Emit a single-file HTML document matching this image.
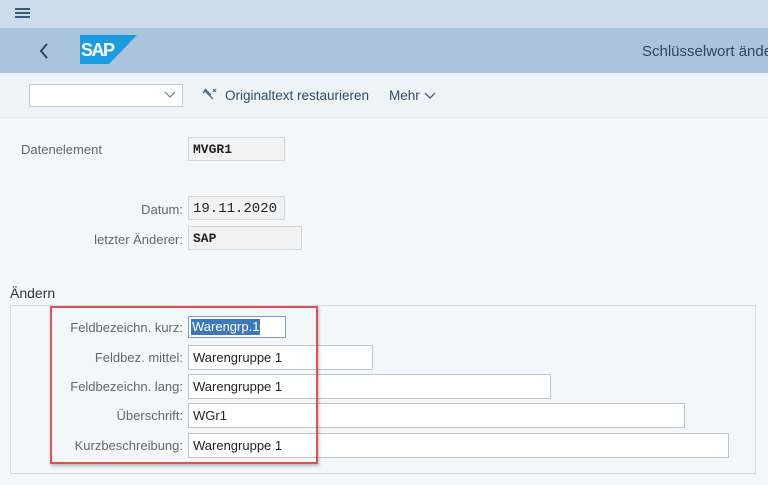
<!DOCTYPE html>
<html><head><meta charset="utf-8">
<style>
*{box-sizing:border-box;margin:0;padding:0}
body{width:768px;height:485px;overflow:hidden;background:#f4f7fa;font-family:"Liberation Sans",sans-serif;position:relative}
.a{position:absolute}
.lbl{position:absolute;font-size:13px;color:#666;text-align:right;width:183px;left:0}
.ro{position:absolute;background:#f2f2f2;border:1px solid #d3d6d9;font-family:"Liberation Mono",monospace;font-size:13px;color:#222;padding:4px 0 0 4px}
.in{position:absolute;background:#fff;border:1px solid #bfc4c9;font-size:13px;color:#222;padding:4px 0 0 4px;left:188px;height:25px}
</style></head><body>
<div class="a" style="left:0;top:0;width:768px;height:28px;background:#ccdcea"></div>
<div class="a" style="left:15px;top:8px;width:15px;height:2px;background:#3d5a78;box-shadow:0 4px 0 #3d5a78,0 8px 0 #3d5a78"></div>
<div class="a" style="left:0;top:28px;width:768px;height:45px;background:#a9c4dc"></div>
<svg class="a" style="left:38px;top:42px" width="12" height="18"><path d="M9 2 L3 9 L9 16" stroke="#2c3e50" stroke-width="1.8" fill="none"/></svg>
<svg class="a" style="left:80px;top:35px" width="58" height="29"><polygon points="0,0 57,0 29,29 0,29" fill="#1a9de0"/><text x="1" y="21" font-family="Liberation Sans" font-weight="bold" font-size="18" fill="#fff" letter-spacing="-1.5">SAP</text></svg>
<div class="a" style="left:642px;top:43px;font-size:15px;color:#32465b;white-space:nowrap">Schlüsselwort ände</div>
<div class="a" style="left:0;top:73px;width:768px;height:45px;background:#eef3f8;border-bottom:1px solid #e3e8ed"></div>
<div class="a" style="left:29px;top:84px;width:154px;height:23px;background:#fff;border:1px solid #c5cbd1"></div>
<svg class="a" style="left:164px;top:91px" width="12" height="8"><path d="M1 1 L6 6 L11 1" stroke="#6a7a8a" stroke-width="1.2" fill="none"/></svg>
<svg class="a" style="left:202px;top:87px" width="16" height="16"><path d="M2 3 L8 9 L11 12 M3 2 L9 8 M1 6 L4 3" stroke="#4a6a8a" stroke-width="1.3" fill="none"/><path d="M11 2 L14 5 M14 2 L11 5" stroke="#4a6a8a" stroke-width="1.2"/></svg>
<div class="a" style="left:225px;top:88px;font-size:13.5px;color:#2f4d6b">Originaltext restaurieren</div>
<div class="a" style="left:389px;top:88px;font-size:13.5px;color:#2f4d6b">Mehr</div>
<svg class="a" style="left:424px;top:92px" width="12" height="8"><path d="M1 1 L6 6 L11 1" stroke="#2f4d6b" stroke-width="1.2" fill="none"/></svg>

<div class="a" style="left:21px;top:142px;font-size:13px;color:#666">Datenelement</div>
<div class="ro" style="left:188px;top:137px;width:97px;height:24px;font-weight:bold">MVGR1</div>
<div class="lbl" style="top:202px">Datum:</div>
<div class="ro" style="left:188px;top:196px;width:97px;height:24px;font-size:14px">19.11.2020</div>
<div class="lbl" style="top:232px">letzter Änderer:</div>
<div class="ro" style="left:188px;top:226px;width:114px;height:24px;font-weight:bold">SAP</div>

<div class="a" style="left:10px;top:285px;font-size:14px;color:#333">Ändern</div>
<div class="a" style="left:10px;top:305px;width:746px;height:169px;border:1px solid #d7dce0;background:#f4f7fa"></div>

<div class="lbl" style="top:320px">Feldbezeichn. kurz:</div>
<div class="a" style="left:188px;top:316px;width:98px;height:22px;background:#fff;border:1px solid #7a9cc0"></div>
<div class="a" style="left:191px;top:319px;width:69px;height:16px;background:#3d78b8"></div>
<div class="a" style="left:192px;top:319px;font-size:13px;color:#fff">Warengrp.1</div>
<div class="lbl" style="top:350px">Feldbez. mittel:</div>
<div class="in" style="top:345px;width:185px">Warengruppe 1</div>
<div class="lbl" style="top:379px">Feldbezeichn. lang:</div>
<div class="in" style="top:374px;width:363px">Warengruppe 1</div>
<div class="lbl" style="top:408px">Überschrift:</div>
<div class="in" style="top:403px;width:497px">WGr1</div>
<div class="lbl" style="top:438px">Kurzbeschreibung:</div>
<div class="in" style="top:433px;width:541px">Warengruppe 1</div>

<div class="a" style="left:50px;top:306px;width:268px;height:158px;border:2px solid #e05050;box-shadow:1px 2px 3px rgba(0,0,0,.25)"></div>
</body></html>
